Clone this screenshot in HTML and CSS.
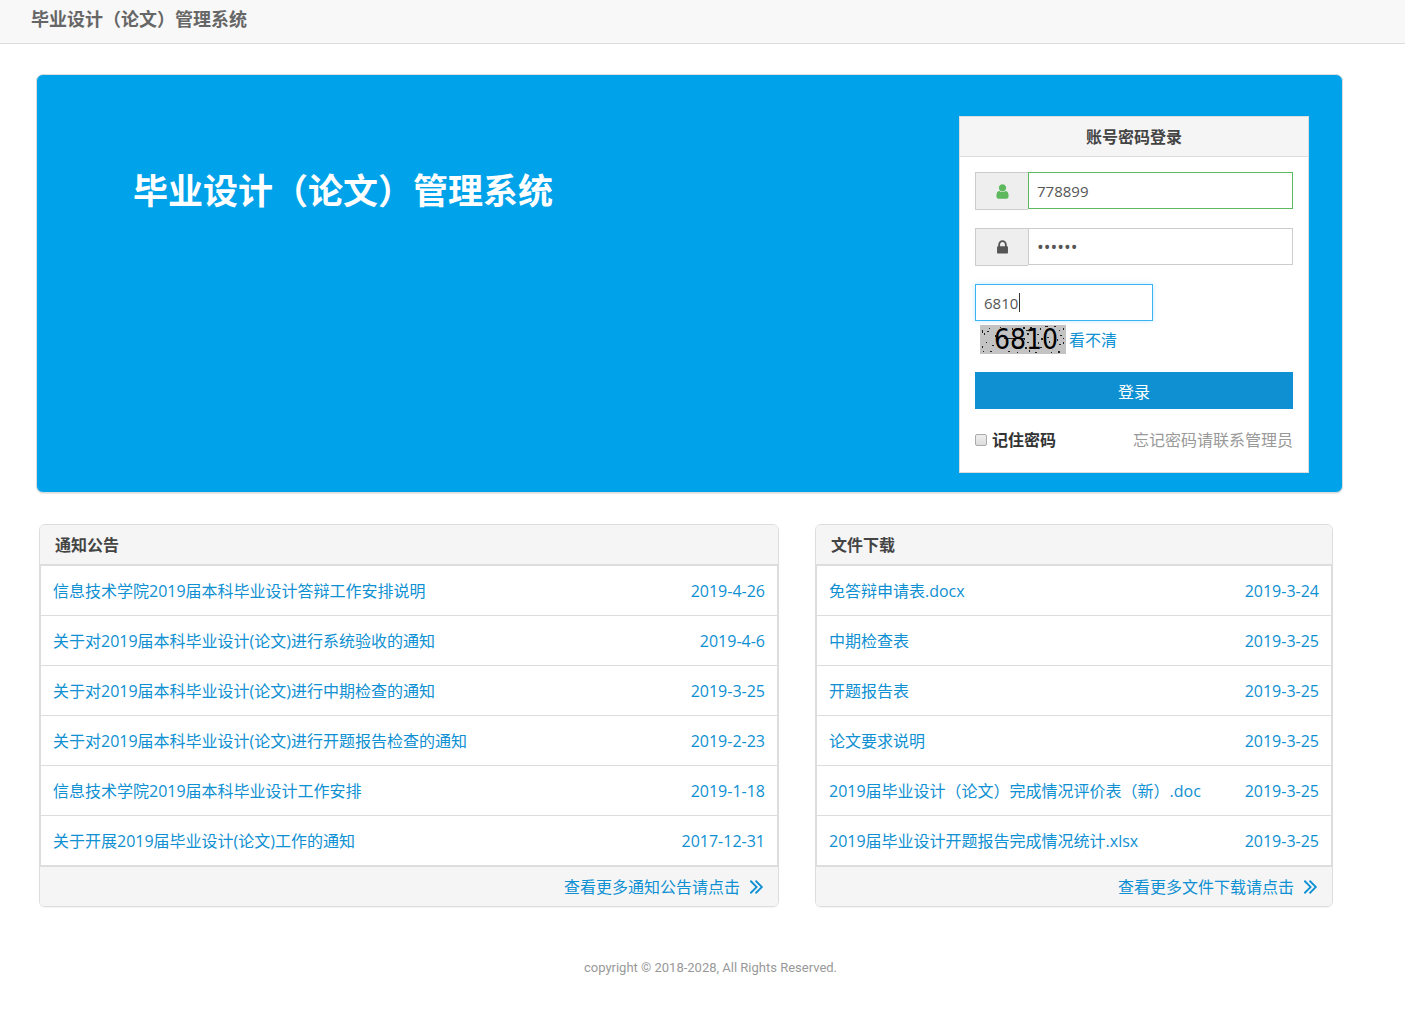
FILE: index.html
```html
<!DOCTYPE html>
<html lang="zh-CN">
<head>
  <meta charset="UTF-8" />
  <meta name="viewport" content="width=device-width, initial-scale=1.0"/>
  <title>毕业设计（论文）管理系统</title>
  <link rel="stylesheet" href="styles.css">
</head>
<body>
  <header class="topbar">
    <h1 class="topbar-title">毕业设计（论文）管理系统</h1>
  </header>

  <!-- Banner + login -->
  <section class="banner">
    <h2 class="banner-title">毕业设计（论文）管理系统</h2>

    <form class="login">
      <div class="login-head">账号密码登录</div>
      <div class="login-body">
        <div class="field valid">
          <label class="addon" for="account" aria-label="账号">
            <svg class="icon" viewBox="0 0 1792 1792"><path d="M1536 1399q0 109-62.5 187t-150.5 78h-854q-88 0-150.5-78t-62.5-187q0-85 8.5-160.5t31.5-152 58.5-131 94-89 134.5-34.5q131 128 313 128t313-128q76 0 134.5 34.5t94 89 58.5 131 31.5 152 8.5 160.5zm-256-887q0 159-112.5 271.5t-271.5 112.5-271.5-112.5-112.5-271.5 112.5-271.5 271.5-112.5 271.5 112.5 112.5 271.5z"/></svg>
          </label>
          <input class="input" type="text" id="account" value="778899">
        </div>
        <div class="field">
          <label class="addon" for="password" aria-label="密码">
            <svg class="icon" viewBox="0 0 1792 1792"><path d="M640 768h512v-192q0-106-75-181t-181-75-181 75-75 181v192zm832 96v576q0 40-28 68t-68 28h-960q-40 0-68-28t-28-68v-576q0-40 28-68t68-28h32v-192q0-184 132-316t316-132 316 132 132 316v192h32q40 0 68 28t28 68z"/></svg>
          </label>
          <input class="input password" type="password" id="password" value="778899">
        </div>
        <div class="captcha">
          <input class="input captcha-input" type="text" id="captcha" value="6810" aria-label="验证码" autofocus>
          <span class="caret"></span>
          <div class="captcha-row">
            <svg class="captcha-img" viewBox="0 0 86 29">
              <rect width="86" height="29" fill="#c3c3c3"/>
              <path class="speckle" d="M2 5h1v3h-1zM4 8h1v2h-1zM9 3h1v1h-1zM7 6h2v1h-2zM2 21h1v2h-1zM6 17h1v1h-1zM12 20h2v1h-2zM10 26h2v1h-2zM3 26h1v1h-1zM15 10h1v2h-1zM20 2h1v1h-1zM28 26h2v1h-2zM32 3h1v2h-1zM43 2h2v2h-2zM46 5h3v1h-3zM50 2h2v3h-2zM47 8h2v2h-2zM44 13h1v2h-1zM47 17h2v1h-2zM45 22h2v2h-2zM49 25h1v2h-1zM60 3h1v2h-1zM57 9h2v1h-2zM61 13h2v2h-2zM58 17h1v2h-1zM60 22h2v1h-2zM65 1h3v1h-3zM74 1h2v1h-2zM79 5h1v1h-1zM83 3h1v2h-1zM80 10h2v1h-2zM77 14h1v2h-1zM83 13h1v1h-1zM79 19h2v1h-2zM83 17h1v2h-1zM78 26h2v2h-2zM71 27h1v1h-1zM67 12h2v1h-2zM69 16h1v2h-1zM34 15h2v1h-2zM37 27h1v1h-1zM55 27h2v1h-2z"/>
              <path class="speckle" d="M24 13h20v1h-20z"/>
              <text class="captcha-text" x="14" y="24">6810</text>
            </svg>
            <a href="#">看不清</a>
          </div>
        </div>
        <button class="submit" type="submit">登录</button>
        <div class="login-extra">
          <label class="remember"><input type="checkbox" class="check">记住密码</label>
          <span class="forgot">忘记密码请联系管理员</span>
        </div>
      </div>
    </form>
  </section>

  <!-- Notices / downloads -->
  <main class="panels">
    <section class="panel">
      <h3 class="panel-title">通知公告</h3>
      <ul class="list">
        <li><a href="#"><span>信息技术学院2019届本科毕业设计答辩工作安排说明</span><span>2019-4-26</span></a></li>
        <li><a href="#"><span>关于对2019届本科毕业设计(论文)进行系统验收的通知</span><span>2019-4-6</span></a></li>
        <li><a href="#"><span>关于对2019届本科毕业设计(论文)进行中期检查的通知</span><span>2019-3-25</span></a></li>
        <li><a href="#"><span>关于对2019届本科毕业设计(论文)进行开题报告检查的通知</span><span>2019-2-23</span></a></li>
        <li><a href="#"><span>信息技术学院2019届本科毕业设计工作安排</span><span>2019-1-18</span></a></li>
        <li><a href="#"><span>关于开展2019届毕业设计(论文)工作的通知</span><span>2017-12-31</span></a></li>
      </ul>
      <div class="panel-foot">
        <a class="more" href="#">查看更多通知公告请点击
          <svg class="icon-more" viewBox="407 461 956 998"><path d="M979 960q0 13-10 23l-466 466q-10 10-23 10t-23-10l-50-50q-10-10-10-23t10-23l393-393-393-393q-10-10-10-23t10-23l50-50q10-10 23-10t23 10l466 466q10 10 10 23zm384 0q0 13-10 23l-466 466q-10 10-23 10t-23-10l-50-50q-10-10-10-23t10-23l393-393-393-393q-10-10-10-23t10-23l50-50q10-10 23-10t23 10l466 466q10 10 10 23z"/></svg>
        </a>
      </div>
    </section>

    <section class="panel">
      <h3 class="panel-title">文件下载</h3>
      <ul class="list">
        <li><a href="#"><span>免答辩申请表.docx</span><span>2019-3-24</span></a></li>
        <li><a href="#"><span>中期检查表</span><span>2019-3-25</span></a></li>
        <li><a href="#"><span>开题报告表</span><span>2019-3-25</span></a></li>
        <li><a href="#"><span>论文要求说明</span><span>2019-3-25</span></a></li>
        <li><a href="#"><span>2019届毕业设计（论文）完成情况评价表（新）.doc</span><span>2019-3-25</span></a></li>
        <li><a href="#"><span>2019届毕业设计开题报告完成情况统计.xlsx</span><span>2019-3-25</span></a></li>
      </ul>
      <div class="panel-foot">
        <a class="more" href="#">查看更多文件下载请点击
          <svg class="icon-more" viewBox="407 461 956 998"><path d="M979 960q0 13-10 23l-466 466q-10 10-23 10t-23-10l-50-50q-10-10-10-23t10-23l393-393-393-393q-10-10-10-23t10-23l50-50q10-10 23-10t23 10l466 466q10 10 10 23zm384 0q0 13-10 23l-466 466q-10 10-23 10t-23-10l-50-50q-10-10-10-23t10-23l393-393-393-393q-10-10-10-23t10-23l50-50q10-10 23-10t23 10l466 466q10 10 10 23z"/></svg>
        </a>
      </div>
    </section>
  </main>

  <footer class="copyright">copyright © 2018-2028, All Rights Reserved.</footer>
</body>
</html>
```
FILE: styles.css
```css
* {
  box-sizing: border-box;
}
body {
  margin: 0;
  font-family: "Open Sans", "Noto Sans CJK SC", sans-serif;
  font-size: 16px;
  line-height: 24px;
  color: #333;
  background: #fff;
}
a {
  color: #0e90d2;
  text-decoration: none;
}
.topbar {
  height: 44px;
  padding: 7px 31px;
  background: #f8f8f8;
  border-bottom: 1px solid #ddd;
}
.topbar-title {
  margin: 0;
  font-size: 18px;
  line-height: 24px;
  color: #666;
}

/* banner */
.banner {
  display: flex;
  justify-content: space-between;
  align-items: flex-start;
  margin: 30px 62px 0 36px;
  padding: 41px 33px 19px 96px;
  background: #00a2e9;
  border: 1px solid #ddd;
  border-radius: 7px;
  box-shadow: 0 1px 1px rgba(0, 0, 0, 0.1);
}
.banner-title {
  margin: 50px 0 0;
  font-size: 35px;
  line-height: 50px;
  color: #fff;
}

/* login */
.login {
  width: 350px;
  background: #fff;
  border: 1px solid #ddd;
}
.login-head {
  height: 40px;
  line-height: 40px;
  text-align: center;
  font-weight: bold;
  color: #444;
  background: #f5f5f5;
  border-bottom: 1px solid #ddd;
}
.login-body {
  padding: 15px 15px 20px;
}
.field {
  display: flex;
  align-items: flex-start;
  margin-bottom: 18px;
}
.addon {
  display: flex;
  align-items: center;
  justify-content: center;
  width: 53px;
  height: 38px;
  background: #eee;
  border: 1px solid #ccc;
  border-right: 0;
}
.icon {
  width: 17px;
  height: 17px;
  fill: #555;
}
.input {
  flex: 1;
  min-width: 0;
  height: 37px;
  padding: 0 8px;
  font-family: inherit;
  font-size: 15px;
  color: #555;
  background: #fff;
  border: 1px solid #ccc;
  border-radius: 0;
  outline: 0;
}
.password {
  font-size: 18px;
}
.valid .icon {
  fill: #5eb95e;
}
.valid .input {
  border-color: #5eb95e;
}
.captcha {
  position: relative;
}
.captcha-input {
  display: block;
  width: 56%;
  caret-color: transparent;
}
.captcha-input:focus {
  border-color: #3bb4f2;
  box-shadow: 0 0 5px rgba(59, 180, 242, 0.3);
}
.caret {
  position: absolute;
  top: 9px;
  left: 44px;
  width: 1px;
  height: 19px;
  background: #333;
}
.captcha-row {
  display: flex;
  align-items: center;
  gap: 3px;
  padding: 4px 5px 0;
}
.captcha-img {
  width: 86px;
  height: 29px;
  overflow: visible;
}
.captcha-text {
  font: 28px "DejaVu Sans Condensed", "Liberation Sans", sans-serif;
}
.speckle {
  fill: #222;
}
.submit {
  display: block;
  width: 100%;
  height: 37px;
  margin: 18px 0 19px;
  padding: 0;
  font-family: inherit;
  font-size: 16px;
  color: #fff;
  background: #0e90d2;
  border: 0;
  cursor: pointer;
}
.login-extra {
  display: flex;
  justify-content: space-between;
  align-items: center;
}
.remember {
  display: flex;
  align-items: center;
  gap: 5px;
  font-weight: bold;
}
.check {
  appearance: none;
  width: 12px;
  height: 12px;
  margin: 0;
  background: linear-gradient(#eee, #ddd);
  border: 1px solid #aaa;
  border-radius: 2px;
}
.forgot {
  color: #999;
}

/* panels */
.panels {
  display: grid;
  grid-template-columns: 10fr 7fr;
  gap: 36px;
  margin: 31px 72px 0 39px;
}
.panel {
  border: 1px solid #ddd;
  border-radius: 6px;
  overflow: hidden;
  box-shadow: 0 1px 1px rgba(0, 0, 0, 0.05);
}
.panel-title {
  height: 40px;
  margin: 0;
  padding: 0 15px;
  font-size: 16px;
  line-height: 40px;
  color: #444;
  background: #f5f5f5;
  border-bottom: 1px solid #ddd;
}
.list {
  margin: 0;
  padding: 0;
  list-style: none;
  border: 1px solid #ddd;
}
.list li + li {
  border-top: 1px solid #ddd;
}
.list a {
  display: flex;
  justify-content: space-between;
  padding: 2px 12px 0;
  line-height: 47px;
}
.panel-foot {
  height: 40px;
  padding: 0 15px;
  background: #f5f5f5;
  border-top: 1px solid #ddd;
}
.more {
  display: flex;
  justify-content: flex-end;
  align-items: center;
  gap: 10px;
  line-height: 40px;
}
.icon-more {
  width: 13px;
  height: 14px;
  fill: #0e90d2;
}

.copyright {
  padding: 49px 0 32px 16px;
  font-family: Roboto, "Open Sans", sans-serif;
  font-size: 13px;
  text-align: center;
  color: #999;
}
```
